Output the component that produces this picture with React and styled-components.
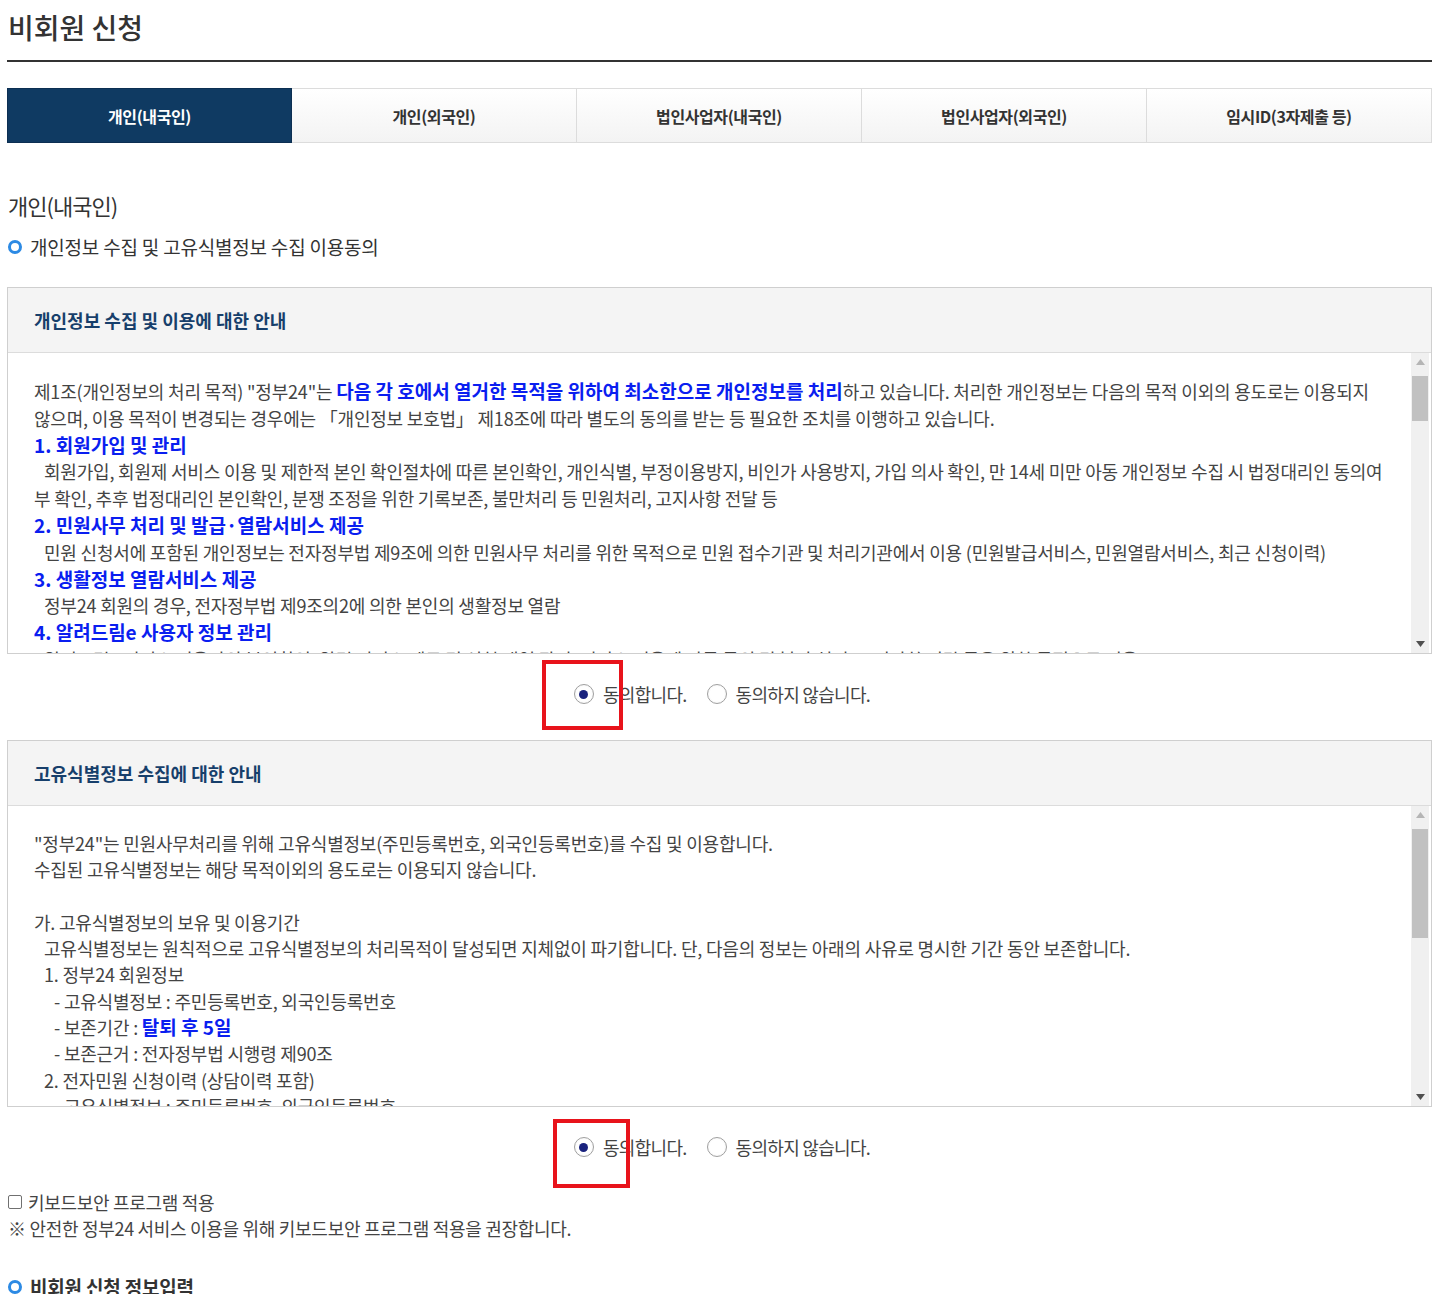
import React from 'react';
import styled, { createGlobalStyle } from 'styled-components';

const GlobalStyle = createGlobalStyle`
  body {
    margin: 0;
    background: #fff;
    font-family: 'Noto Sans CJK KR', 'Noto Sans', sans-serif;
    color: #333;
  }
`;

const tabs = ['개인(내국인)', '개인(외국인)', '법인사업자(내국인)', '법인사업자(외국인)', '임시ID(3자제출 등)'];

const App = () => {
  return (
    <Page>
      <GlobalStyle />
      <PageTitle>비회원 신청</PageTitle>

      <TabList>
        {tabs.map((t, i) => (
          <Tab key={t} $active={i === 0}>{t}</Tab>
        ))}
      </TabList>

      <SectionTitle>개인(내국인)</SectionTitle>
      <BulletTitle>개인정보 수집 및 고유식별정보 수집 이용동의</BulletTitle>

      <Panel>
        <PanelHead>개인정보 수집 및 이용에 대한 안내</PanelHead>
        <PanelBody>
          <ScrollText $pt={25} $lh={26.8}>
            <Line>
              제1조(개인정보의 처리 목적) "정부24"는 <Strong>다음 각 호에서 열거한 목적을 위하여 최소한으로 개인정보를 처리</Strong>하고 있습니다. 처리한 개인정보는 다음의 목적 이외의 용도로는 이용되지 않으며, 이용 목적이 변경되는 경우에는 「개인정보 보호법」 제18조에 따라 별도의 동의를 받는 등 필요한 조치를 이행하고 있습니다.
            </Line>
            <BlueHead>1. 회원가입 및 관리</BlueHead>
            <Line $indent={10}>
              회원가입, 회원제 서비스 이용 및 제한적 본인 확인절차에 따른 본인확인, 개인식별, 부정이용방지, 비인가 사용방지, 가입 의사 확인, 만 14세 미만 아동 개인정보 수집 시 법정대리인 동의여부 확인, 추후 법정대리인 본인확인, 분쟁 조정을 위한 기록보존, 불만처리 등 민원처리, 고지사항 전달 등
            </Line>
            <BlueHead>2. 민원사무 처리 및 발급·열람서비스 제공</BlueHead>
            <Line $indent={10}>
              민원 신청서에 포함된 개인정보는 전자정부법 제9조에 의한 민원사무 처리를 위한 목적으로 민원 접수기관 및 처리기관에서 이용 (민원발급서비스, 민원열람서비스, 최근 신청이력)
            </Line>
            <BlueHead>3. 생활정보 열람서비스 제공</BlueHead>
            <Line $indent={10}>정부24 회원의 경우, 전자정부법 제9조의2에 의한 본인의 생활정보 열람</Line>
            <BlueHead>4. 알려드림e 사용자 정보 관리</BlueHead>
            <Line $indent={10}>
              알려드림e 서비스 이용자의 본인확인, 알림 서비스 제공 및 신청 내역 관리, 서비스 이용에 따른 문의 및 불만 처리, 고지사항 전달 등을 위한 목적으로 이용
            </Line>
          </ScrollText>
          <FakeScrollbar $thumbTop={5} $thumbHeight={45} />
        </PanelBody>
      </Panel>

      <AgreeRow box={{ left: -33, top: -25, width: 81, height: 70 }} />

      <Panel $mt={6}>
        <PanelHead>고유식별정보 수집에 대한 안내</PanelHead>
        <PanelBody>
          <ScrollText $pt={24} $lh={26.3}>
            <Line>"정부24"는 민원사무처리를 위해 고유식별정보(주민등록번호, 외국인등록번호)를 수집 및 이용합니다.</Line>
            <Line>수집된 고유식별정보는 해당 목적이외의 용도로는 이용되지 않습니다.</Line>
            <Line>&nbsp;</Line>
            <Line>가. 고유식별정보의 보유 및 이용기간</Line>
            <Line $indent={10}>고유식별정보는 원칙적으로 고유식별정보의 처리목적이 달성되면 지체없이 파기합니다. 단, 다음의 정보는 아래의 사유로 명시한 기간 동안 보존합니다.</Line>
            <Line $indent={10}>1. 정부24 회원정보</Line>
            <Line $indent={20}>- 고유식별정보 : 주민등록번호, 외국인등록번호</Line>
            <Line $indent={20}>- 보존기간 : <Strong>탈퇴 후 5일</Strong></Line>
            <Line $indent={20}>- 보존근거 : 전자정부법 시행령 제90조</Line>
            <Line $indent={10}>2. 전자민원 신청이력 (상담이력 포함)</Line>
            <Line $indent={20}>- 고유식별정보 : 주민등록번호, 외국인등록번호</Line>
            <Line $indent={20}>- 보존기간 : 신청일로부터 5년</Line>
          </ScrollText>
          <FakeScrollbar $thumbTop={5} $thumbHeight={109} />
        </PanelBody>
      </Panel>

      <AgreeRow box={{ left: -22, top: -19, width: 77, height: 69 }} />

      <Keyboard>
        <CheckLabel>
          <CheckBox />
          키보드보안 프로그램 적용
        </CheckLabel>
        <Notice>※ 안전한 정부24 서비스 이용을 위해 키보드보안 프로그램 적용을 권장합니다.</Notice>
      </Keyboard>

      <BulletTitle $bold $mt={32}>비회원 신청 정보입력</BulletTitle>
    </Page>
  );
};

const AgreeRow = ({ box }) => (
  <RadioRow>
    <RadioItem>
      <RadioCircle $checked>
        <Highlight style={{ left: box.left, top: box.top, width: box.width, height: box.height }} />
      </RadioCircle>
      동의합니다.
    </RadioItem>
    <RadioItem>
      <RadioCircle />
      동의하지 않습니다.
    </RadioItem>
  </RadioRow>
);

const FakeScrollbar = ({ $thumbTop, $thumbHeight }) => (
  <ScrollTrack>
    <ArrowBtn>
      <svg width="9" height="6" viewBox="0 0 9 6"><path d="M0 6 L4.5 0 L9 6 Z" fill="#b5b5b5" /></svg>
    </ArrowBtn>
    <TrackArea>
      <Thumb $top={$thumbTop} $height={$thumbHeight} />
    </TrackArea>
    <ArrowBtn>
      <svg width="9" height="6" viewBox="0 0 9 6"><path d="M0 0 L9 0 L4.5 6 Z" fill="#505050" /></svg>
    </ArrowBtn>
  </ScrollTrack>
);

export default App;

// styles
const Page = styled.div`
  padding: 0 10px 20px 7px;
`;

const PageTitle = styled.h1`
  margin: 0;
  height: 60px;
  padding-left: 1px;
  font-size: 28px;
  font-weight: 500;
  line-height: 54px;
  letter-spacing: 0;
  color: #333;
  border-bottom: 2px solid #333;
`;

const TabList = styled.div`
  display: grid;
  grid-template-columns: repeat(5, 1fr);
  margin-top: 26px;
`;

const Tab = styled.div`
  height: 55px;
  display: flex;
  align-items: center;
  justify-content: center;
  box-sizing: border-box;
  border: 1px solid ${p => (p.$active ? '#0c2f52' : '#dcdcdc')};
  border-left-width: ${p => (p.$active ? '1px' : '0')};
  background: ${p => (p.$active ? '#0f3a62' : 'linear-gradient(#ffffff, #f3f3f3)')};
  color: ${p => (p.$active ? '#fff' : '#333')};
  font-size: 16px;
  font-weight: 700;
  letter-spacing: -0.4px;
  cursor: pointer;
`;

const SectionTitle = styled.h2`
  margin: 48px 0 0 1px;
  font-size: 22px;
  font-weight: 400;
  line-height: 28px;
  letter-spacing: -1px;
  color: #333;
`;

const BulletTitle = styled.h3`
  display: flex;
  align-items: center;
  gap: 8px;
  margin: ${p => (p.$mt ? p.$mt : 14)}px 0 0 1px;
  font-size: 19px;
  font-weight: ${p => (p.$bold ? 700 : 400)};
  line-height: 28px;
  letter-spacing: -0.2px;
  color: #333;

  &::before {
    content: '';
    width: 8px;
    height: 8px;
    border: 3px solid #2c8ae4;
    border-radius: 50%;
    flex: none;
  }
`;

const Panel = styled.div`
  margin-top: ${p => (p.$mt ? p.$mt : 26)}px;
  border: 1px solid #cfcfcf;
`;

const PanelHead = styled.div`
  height: 64px;
  display: flex;
  align-items: center;
  padding-left: 26px;
  background: #f4f4f4;
  border-bottom: 1px solid #dcdcdc;
  font-size: 18px;
  font-weight: 700;
  letter-spacing: 0;
  color: #173f6b;
`;

const PanelBody = styled.div`
  display: flex;
  height: 300px;
  background: #fff;
`;

const ScrollText = styled.div`
  flex: 1;
  overflow: hidden;
  padding: ${p => p.$pt}px 22px 0 26px;
  font-size: 18px;
  line-height: ${p => p.$lh}px;
  letter-spacing: -0.2px;
  color: #444;
`;

const Line = styled.p`
  margin: 0;
  text-indent: ${p => p.$indent || 0}px;
`;

const Strong = styled.strong`
  font-size: 19px;
  font-weight: 700;
  letter-spacing: 0;
  color: #0a1ef0;
`;

const BlueHead = styled.p`
  margin: 0;
  font-size: 19px;
  font-weight: 700;
  color: #0a1ef0;
  letter-spacing: 0;
`;

const ScrollTrack = styled.div`
  width: 18px;
  margin-right: 2px;
  display: flex;
  flex-direction: column;
  background: #f0f0f0;
`;

const ArrowBtn = styled.div`
  height: 18px;
  flex: none;
  display: flex;
  align-items: center;
  justify-content: center;
`;

const TrackArea = styled.div`
  flex: 1;
  padding: 0 1px;
`;

const Thumb = styled.div`
  margin-top: ${p => p.$top}px;
  height: ${p => p.$height}px;
  background: #c1c1c1;
`;

const RadioRow = styled.div`
  height: 80px;
  display: flex;
  align-items: center;
  justify-content: center;
  gap: 20px;
  padding-left: 5px;
  font-size: 18px;
  letter-spacing: -0.7px;
  color: #444;
`;

const RadioItem = styled.label`
  display: flex;
  align-items: center;
  gap: 9px;
  cursor: pointer;
`;

const RadioCircle = styled.span`
  position: relative;
  width: 20px;
  height: 20px;
  box-sizing: border-box;
  border: 1px solid #a0a0a0;
  border-radius: 50%;
  background: radial-gradient(circle, #fff 55%, #ececec 100%);
  display: flex;
  align-items: center;
  justify-content: center;

  &::after {
    content: '';
    display: ${p => (p.$checked ? 'block' : 'none')};
    width: 9px;
    height: 9px;
    border-radius: 50%;
    background: #1a237e;
  }
`;

const Highlight = styled.span`
  position: absolute;
  box-sizing: border-box;
  border: 4px solid #e8131b;
  pointer-events: none;
`;

const Keyboard = styled.div`
  margin-top: 2px;
  padding-left: 1px;
  font-size: 18px;
  line-height: 26px;
  letter-spacing: -0.3px;
  color: #444;
`;

const CheckLabel = styled.label`
  display: flex;
  align-items: center;
  gap: 6px;
`;

const CheckBox = styled.span`
  width: 14px;
  height: 14px;
  box-sizing: border-box;
  border: 1px solid #707070;
  border-radius: 2px;
  background: #fff;
`;

const Notice = styled.p`
  margin: 0;
`;
